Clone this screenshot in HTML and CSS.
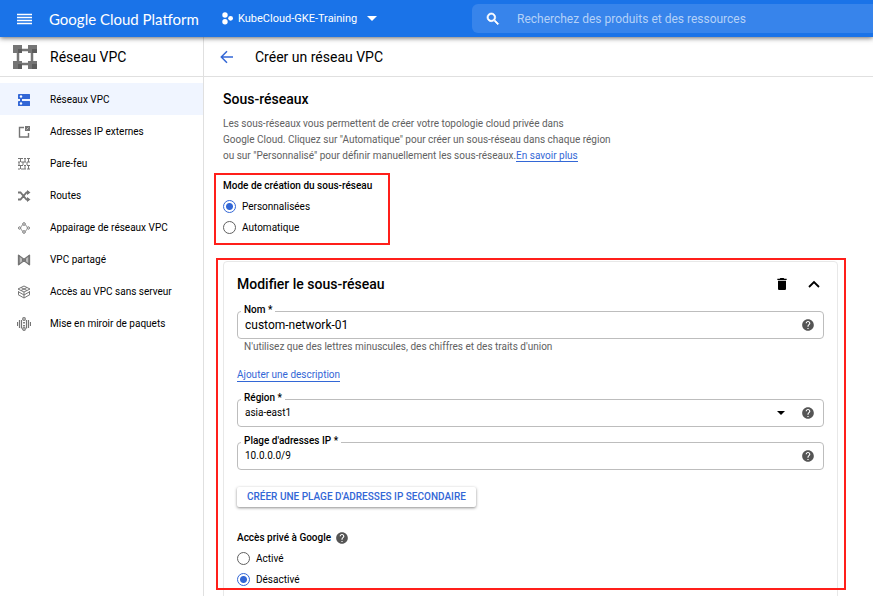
FILE: index.html
```html
<!DOCTYPE html>
<html lang="fr">
<head>
<meta charset="utf-8">
<meta name="viewport" content="width=device-width, initial-scale=1">
<title>Créer un réseau VPC</title>
<link rel="stylesheet" href="styles.css">
</head>
<body>
<svg class="sprite" aria-hidden="true">
  <symbol id="help" viewBox="0 0 24 24"><path d="M12 2C6.480 2 2 6.480 2 12s4.480 10 10 10 10-4.480 10-10S17.520 2 12 2zm1 17h-2v-2h2v2zm2.070-7.750l-.9.920C13.450 12.900 13 13.500 13 15h-2v-.5c0-1.100.450-2.100 1.170-2.830l1.240-1.260c.370-.360.590-.860.590-1.410 0-1.100-.9-2-2-2s-2 .9-2 2H8c0-2.210 1.790-4 4-4s4 1.790 4 4c0 .880-.360 1.680-.930 2.250z"/></symbol>
</svg>

<header class="topbar">
  <div class="brand">
    <button class="icon-button" aria-label="Menu"><svg width="16" height="12" viewBox="0 0 16 12"><path d="M1 1.500h15M1 4.500h15M1 7.500h15M1 10.500h15" stroke="#fff" stroke-width="1.400"/></svg></button>
    <a class="brand-name" href="#">Google Cloud Platform</a>
  </div>
  <button class="project">
    <svg width="12" height="13" viewBox="0 0 12 13" fill="#fff"><circle cx="3" cy="3" r="2.700"/><circle cx="3" cy="9.700" r="2.700"/><circle cx="8.600" cy="6.300" r="2.400"/></svg>
    <span>KubeCloud-GKE-Training</span>
    <svg class="caret" width="10" height="5" viewBox="0 0 10 5"><path d="M0 0h10L5 5z" fill="#fff"/></svg>
  </button>
  <label class="search">
    <svg width="16" height="16" viewBox="0 0 24 24"><path fill="#fff" stroke="#fff" d="M15.500 14h-.79l-.28-.27A6.470 6.470 0 0 0 16 9.500 6.500 6.500 0 1 0 9.500 16c1.610 0 3.090-.59 4.230-1.570l.27.28v.79l5 4.990L20.490 19l-4.990-5zm-6 0C7.010 14 5 11.990 5 9.500S7.010 5 9.500 5 14 7.010 14 9.500 11.990 14 9.500 14z"/></svg>
    <input type="search" aria-label="Recherche" placeholder="Recherchez des produits et des ressources">
  </label>
</header>

<div class="layout">
  <aside class="sidebar">
    <div class="section-bar product">
      <svg width="24" height="24" viewBox="0 0 24 24"><path d="M5 8v8M19 8v8M8 5h8M8 19h8" stroke="#757575" stroke-width="2.500"/><g fill="#757575"><path d="M0 0h9v8H0zM15 0h9v8h-9zM0 16h9v8H0zM15 16h9v8h-9z"/></g><path fill="#5c5c5c" d="M5 4h4v4H5zM19 4h5v4h-5zM5 19h4v5H5zM19 19h5v5h-5z"/></svg>
      <h2>Réseau VPC</h2>
    </div>
    <nav class="nav">
      <a class="active" href="#" aria-current="page"><svg viewBox="0 0 14 14"><path fill="#3367d6" d="M2 1h10.500q.5 0 .5.500v4q0 .5-.5.500H2Q1 6 1 5.500v-4Q1 1 2 1zM2 8h10.500q.5 0 .5.500v4q0 .5-.5.500H2q-1 0-1-.5v-4Q1 8 2 8zM3 5h2v4H3z"/><g fill="#fff"><circle cx="4" cy="3.500" r="1.200"/><circle cx="4" cy="10.500" r="1.200"/></g></svg>Réseaux VPC</a>
      <a href="#"><svg viewBox="0 0 14 14"><path d="M7 2.500H2.500v9.500h9V8" fill="none" stroke="#757575" stroke-width="1.400"/><path fill="#757575" d="M8 1h5v5h-2.500L8 6z"/><path stroke="#fff" d="M9.500 4.500l2-2" stroke-width=".6"/></svg>Adresses IP externes</a>
      <a href="#"><svg viewBox="0 0 14 14"><path d="M1 1.500h5M7 1.500h2M10 1.500h3M1 5h2M4 5h5M10 5h3M1 8.500h5M7 8.500h2M10 8.500h3M1 12h2M4 12h5M10 12h3M3.500 2v3M8 2v3M11.500 2v3M3.500 9v3M8 9v3M11.500 9v3M6 5v3M2 5v3M10 5v3" stroke="#757575" stroke-width="1"/></svg>Pare-feu</a>
      <a href="#"><svg viewBox="0 0 14 14"><path d="M1 3.500h2.500l6 7H12M1 10.500h2.500l6-7H12" fill="none" stroke="#757575" stroke-width="1.800"/><path fill="#757575" d="M10 1l3.500 2.500L10 6zM10 8l3.500 2.500L10 13z"/></svg>Routes</a>
      <a href="#"><svg viewBox="0 0 14 14"><g fill="none" stroke="#757575"><circle cx="7" cy="3" r="1.300"/><circle cx="7" cy="11" r="1.300"/><circle cx="2.700" cy="7" r="1.200"/><circle cx="11.300" cy="7" r="1.200"/><path d="M5.700 4L4 5.500M8.300 4L10 5.500M4 8.500L5.700 10M10 8.500L8.300 10"/></g></svg>Appairage de réseaux VPC</a>
      <a href="#"><svg viewBox="0 0 14 14"><path d="M1.800 2.500v9L7 7.800l5.200 3.700v-9L7 6.200z" fill="#bdbdbd" stroke="#757575" stroke-width="1.200"/><path d="M1.700 2v10M12.300 2v10" stroke="#757575" stroke-width="1.700"/><path fill="#757575" d="M5 5.500l2 1 2-1v3l-2-1-2 1z"/></svg>VPC partagé</a>
      <a href="#"><svg viewBox="0 0 14 14"><g fill="none" stroke="#757575"><path d="M7 1l6 3-6 3-6-3zM4 2.500l6 3M10 2.500l-6 3M1 6.500L7 10l6-3.500M1 9.500L7 13l6-3.500M1.500 6.500v3M12.500 6.500v3M7 7v6"/></g></svg>Accès au VPC sans serveur</a>
      <a href="#"><svg viewBox="0 0 14 14"><g fill="none" stroke="#757575" stroke-width="1.200"><path d="M.5 5v4M2.500 3v8M11.500 3v8M13.500 5v4M4.500 3v8.500M9.500 3v8.500"/><circle cx="7" cy="2" r="1.300"/><circle cx="7" cy="12" r="1.300"/><path d="M7 5v1.500M7 8v1.500" stroke-width="1.800"/></g></svg>Mise en miroir de paquets</a>
    </nav>
  </aside>

  <main class="main">
    <div class="section-bar page-title">
      <button class="icon-button" aria-label="Retour"><svg width="14" height="14" viewBox="0 0 14 14"><path d="M13 7H1.500M7 1.300L1.300 7 7 12.700" fill="none" stroke="#3367d6" stroke-width="1.500"/></svg></button>
      <h1>Créer un réseau VPC</h1>
    </div>

    <div class="content">
      <h2>Sous-réseaux</h2>
      <p class="intro">Les sous-réseaux vous permettent de créer votre topologie cloud privée dans<br>Google Cloud. Cliquez sur "Automatique" pour créer un sous-réseau dans chaque région<br>ou sur "Personnalisé" pour définir manuellement les sous-réseaux.<a href="#">En savoir plus</a></p>

      <div class="mode">
        <fieldset class="choices">
          <legend>Mode de création du sous-réseau</legend>
          <label><input type="radio" name="mode" checked>Personnalisées</label>
          <label><input type="radio" name="mode">Automatique</label>
        </fieldset>
      </div>

      <section class="card">
        <div class="card-head">
          <h2>Modifier le sous-réseau</h2>
          <button class="icon-button" aria-label="Supprimer"><svg width="16" height="16" viewBox="0 0 24 24"><path d="M6 19c0 1.100.9 2 2 2h8c1.100 0 2-.9 2-2V7H6v12zM19 4h-3.500l-1-1h-5l-1 1H5v2h14V4z"/></svg></button>
          <button class="icon-button" aria-label="Réduire"><svg width="12" height="12" viewBox="0 0 12 12"><path d="M1 9l5-5 5 5" fill="none" stroke="#000" stroke-width="1.800"/></svg></button>
        </div>

        <div class="field name">
          <label for="nom">Nom *</label>
          <input id="nom" type="text" value="custom-network-01">
          <svg class="help"><use href="#help"/></svg>
        </div>
        <p class="hint">N'utilisez que des lettres minuscules, des chiffres et des traits d'union</p>
        <a class="add" href="#">Ajouter une description</a>

        <div class="field">
          <label for="region">Région *</label>
          <select id="region"><option>asia-east1</option></select>
          <svg class="drop" width="8" height="4" viewBox="0 0 8 4"><path d="M0 0h8L4 4z"/></svg>
          <svg class="help"><use href="#help"/></svg>
        </div>
        <div class="field">
          <label for="plage">Plage d'adresses IP *</label>
          <input id="plage" type="text" value="10.0.0.0/9">
          <svg class="help"><use href="#help"/></svg>
        </div>

        <button class="raised">Créer une plage d'adresses IP secondaire</button>

        <fieldset class="choices">
          <legend>Accès privé à Google <svg class="help"><use href="#help"/></svg></legend>
          <label><input type="radio" name="acces">Activé</label>
          <label><input type="radio" name="acces" checked>Désactivé</label>
        </fieldset>
      </section>
    </div>
  </main>
</div>
</body>
</html>
```

FILE: styles.css
```css
* { box-sizing: border-box; }

body {
  margin: 0;
  height: 100vh;
  overflow: hidden;
  display: flex;
  flex-direction: column;
  font: 10px/16px Roboto, "Liberation Sans", sans-serif;
  color: #000;
  background: #fff;
}

h1, h2, p { margin: 0; }
svg { flex: none; display: block; }
.sprite { position: absolute; width: 0; height: 0; }
button, input, select { font: inherit; color: inherit; }
button { border: 0; padding: 0; background: none; cursor: pointer; }
.icon-button { display: flex; align-items: center; justify-content: center; }

/* Top bar */
.topbar {
  position: relative;
  z-index: 1;
  flex: none;
  display: flex;
  align-items: center;
  height: 37px;
  color: #fff;
  background: #1a73e8;
  box-shadow: 0 1px 5px rgba(0, 0, 0, .6);
}
.brand { display: flex; align-items: center; gap: 17px; width: 222px; padding-left: 16px; }
.brand-name { color: #fff; font: 15px/20px Lato, Roboto, sans-serif; text-decoration: none; white-space: nowrap; }
.project { display: flex; align-items: center; gap: 4px; width: 250px; font-size: 11px; }
.caret { margin-left: 6px; }
.search {
  flex: 1;
  display: flex;
  align-items: center;
  gap: 16px;
  height: 29px;
  padding-left: 13px;
  border-radius: 6px 0 0 6px;
  background: #3784eb;
}
.search input {
  flex: 1;
  min-width: 0;
  padding: 0;
  border: 0;
  outline: 0;
  background: none;
  font-size: 12px;
}
.search input::placeholder { color: #b4d1f8; }

/* Page frame */
.layout { flex: 1; min-height: 0; display: flex; }
.sidebar { flex: none; width: 204px; border-right: 1px solid #e0e0e0; }
.main { flex: 1; min-width: 0; overflow: hidden; }
.section-bar { display: flex; align-items: center; height: 40px; border-bottom: 1px solid #e0e0e0; }
.section-bar h1, .section-bar h2 { font-size: 14px; font-weight: 400; line-height: 20px; }
.product { gap: 13px; padding-left: 13px; }
.page-title { gap: 21px; padding-left: 16px; }

.nav { padding-top: 6px; }
.nav a {
  display: flex;
  align-items: center;
  gap: 19px;
  height: 32px;
  padding: 1px 0 0 17px;
  color: #000;
  text-decoration: none;
}
.nav svg { width: 14px; height: 14px; }
.nav .active { background: #f0f5ff; }

/* Content */
.content { padding: 12px 35px 0 19px; }
.content h2 { font-size: 14px; font-weight: 500; line-height: 20px; }
.content a { color: #3367d6; text-decoration: none; border-bottom: 1px solid #3367d6; }
.intro { margin-top: 7px; color: #616161; }

.choices { margin: 0; padding: 0; border: 0; }
.choices legend { display: flex; align-items: center; gap: 4px; padding: 0; font-weight: 500; line-height: 16px; }
.choices label { display: flex; align-items: center; gap: 6px; width: max-content; height: 21px; }
.choices legend + label { margin-top: 2px; }
input[type="radio"] {
  appearance: none;
  width: 13px;
  height: 13px;
  margin: 0;
  border: 1px solid #616161;
  border-radius: 50%;
}
input[type="radio"]:checked {
  border-color: #3367d6;
  background: radial-gradient(circle, #3367d6 3px, #fff 4px);
}

/* Red call-out frames drawn over the page */
.mode { position: relative; width: max-content; min-width: 155px; margin-top: 14px; }
.mode::after, .card::after {
  content: "";
  position: absolute;
  border: 2px solid #ff1f1a;
  pointer-events: none;
}
.mode::after { inset: -5px -12px -7px -9px; }
.card::after { inset: -4px -9px 16px -8px; }

.card {
  position: relative;
  margin-top: 23px;
  padding: 12px 13px 16px;
  border: 1px solid #e8e8e8;
  border-radius: 4px;
}
.card-head { display: flex; align-items: center; }
.card-head h2 { flex: 1; }
.card-head .icon-button { width: 20px; height: 20px; }
.card-head .icon-button + .icon-button { margin-left: 12px; }

.field {
  position: relative;
  display: flex;
  align-items: center;
  gap: 16px;
  height: 28px;
  margin-top: 15px;
  padding: 0 8px 0 7px;
  border: 1px solid #bdbdbd;
  border-radius: 4px;
}
.field label {
  position: absolute;
  top: -8px;
  left: 3px;
  padding: 0 3px;
  background: #fff;
  font-weight: 500;
  line-height: 12px;
}
.field input, .field select {
  flex: 1;
  min-width: 0;
  padding: 0;
  border: 0;
  outline: 0;
  background: none;
  appearance: none;
}
.name { margin-top: 17px; }
.name input { font-size: 12px; }
.help { width: 14px; height: 14px; fill: #555; }
.hint { margin-left: 7px; color: #616161; }
.content .add { display: table; margin: 14px 0 17px; line-height: 12px; }

.raised {
  display: block;
  height: 20px;
  margin: 17px 0 23px;
  padding: 0 10px;
  border-radius: 2px;
  color: #3367d6;
  font-weight: 500;
  text-transform: uppercase;
  box-shadow: 0 1px 3px rgba(0, 0, 0, .45);
}
```
